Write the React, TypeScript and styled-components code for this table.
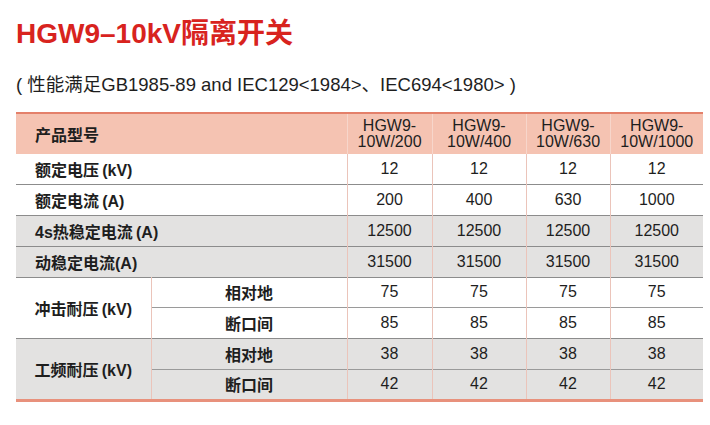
import React from "react";
import styled, { createGlobalStyle } from "styled-components";

const Global = createGlobalStyle`
  html, body { margin: 0; padding: 0; background: #ffffff; }
  body { font-family: "Liberation Sans", "Noto Sans CJK SC", sans-serif; color: #1e1e1e; }
`;

const Page = styled.div`
  width: 710px;
  height: 425px;
  padding: 18px 7px 0 16px;
  box-sizing: border-box;
  overflow: hidden;
`;

const Title = styled.h1`
  margin: 0;
  font-size: 28px;
  line-height: 32px;
  font-weight: 700;
  color: #d8231e;
`;

const Subtitle = styled.p`
  margin: 24px 0 0 0;
  font-size: 18.5px;
  line-height: 22px;
  color: #1e1e1e;
`;

const Table = styled.table`
  margin-top: 16px;
  width: 687px;
  table-layout: fixed;
  border-collapse: collapse;
  border-top: 2px solid #e4806a;
  border-bottom: 3px solid #e8917c;
`;

const HeadRow = styled.tr`
  background: #f5c3b2;
  height: 41px;
`;

const Row = styled.tr<{ $shade?: boolean }>`
  background: ${(p) => (p.$shade ? "#e3e2e1" : "#ffffff")};
  height: 30.75px;
`;

const HeadLabel = styled.th`
  text-align: left;
  padding: 0 0 0 19px;
  font-size: 16px;
  font-weight: 700;
  border-right: 1px solid #f7d6cb;
`;

const HeadModel = styled.th`
  font-size: 16px;
  line-height: 16px;
  font-weight: 400;
  text-align: center;
  padding: 0;
  border-left: 1px solid #f7d6cb;
`;

const Label = styled.td<{ $top?: boolean }>`
  padding: 0 0 0 19px;
  font-size: 16px;
  font-weight: 700;
  border-top: ${(p) => (p.$top ? "1.5px solid #8c8c8c" : "none")};
`;

const GroupLabel = styled.td`
  text-align: center;
  font-size: 16px;
  font-weight: 700;
  padding: 0;
  border-top: 1.5px solid #8c8c8c;
  border-right: 1px solid #ebc4ba;
`;

const SubLabel = styled.td<{ $line: "dark" | "light" }>`
  text-align: center;
  font-size: 16px;
  font-weight: 700;
  padding: 0;
  border-top: 1.5px solid ${(p) => (p.$line === "dark" ? "#8c8c8c" : "#9a9a9a")};
`;

const Value = styled.td<{ $line?: "dark" | "light" | "none" }>`
  text-align: center;
  font-size: 16px;
  padding: 0;
  border-left: 1px solid #ebc4ba;
  border-top: ${(p) =>
    p.$line === "none" || !p.$line
      ? "none"
      : `1.5px solid ${p.$line === "dark" ? "#8c8c8c" : "#9a9a9a"}`};
`;

const models = ["10W/200", "10W/400", "10W/630", "10W/1000"];

type Simple = { label: string; values: string[]; shade: boolean; top: boolean };
const simpleRows: Simple[] = [
  { label: "额定电压\u2009(kV)", values: ["12", "12", "12", "12"], shade: false, top: false },
  { label: "额定电流\u2009(A)", values: ["200", "400", "630", "1000"], shade: false, top: true },
  { label: "4s热稳定电流\u2009(A)", values: ["12500", "12500", "12500", "12500"], shade: true, top: true },
  { label: "动稳定电流(A)", values: ["31500", "31500", "31500", "31500"], shade: true, top: true },
];

type Group = { label: string; shade: boolean; rows: { sub: string; values: string[] }[] };
const groups: Group[] = [
  {
    label: "冲击耐压\u2009(kV)",
    shade: false,
    rows: [
      { sub: "相对地", values: ["75", "75", "75", "75"] },
      { sub: "断口间", values: ["85", "85", "85", "85"] },
    ],
  },
  {
    label: "工频耐压\u2009(kV)",
    shade: true,
    rows: [
      { sub: "相对地", values: ["38", "38", "38", "38"] },
      { sub: "断口间", values: ["42", "42", "42", "42"] },
    ],
  },
];

export default function App() {
  return (
    <Page>
      <Global />
      <Title>HGW9–10kV隔离开关</Title>
      <Subtitle>( 性能满足GB1985-89 and IEC129&lt;1984&gt;、IEC694&lt;1980&gt; )</Subtitle>
      <Table>
        <colgroup>
          <col style={{ width: 135 }} />
          <col style={{ width: 196 }} />
          <col style={{ width: 85 }} />
          <col style={{ width: 94 }} />
          <col style={{ width: 84 }} />
          <col style={{ width: 93 }} />
        </colgroup>
        <thead>
          <HeadRow>
            <HeadLabel colSpan={2}>产品型号</HeadLabel>
            {models.map((m) => (
              <HeadModel key={m}>
                HGW9-
                <br />
                {m}
              </HeadModel>
            ))}
          </HeadRow>
        </thead>
        <tbody>
          {simpleRows.map((r) => (
            <Row key={r.label} $shade={r.shade}>
              <Label colSpan={2} $top={r.top}>
                {r.label}
              </Label>
              {r.values.map((v, i) => (
                <Value key={i} $line={r.top ? "dark" : "none"}>
                  {v}
                </Value>
              ))}
            </Row>
          ))}
          {groups.map((g) =>
            g.rows.map((r, ri) => (
              <Row key={g.label + ri} $shade={g.shade}>
                {ri === 0 && <GroupLabel rowSpan={2}>{g.label}</GroupLabel>}
                <SubLabel $line={ri === 0 ? "dark" : "light"}>{r.sub}</SubLabel>
                {r.values.map((v, i) => (
                  <Value key={i} $line={ri === 0 ? "dark" : "light"}>
                    {v}
                  </Value>
                ))}
              </Row>
            ))
          )}
        </tbody>
      </Table>
    </Page>
  );
}
